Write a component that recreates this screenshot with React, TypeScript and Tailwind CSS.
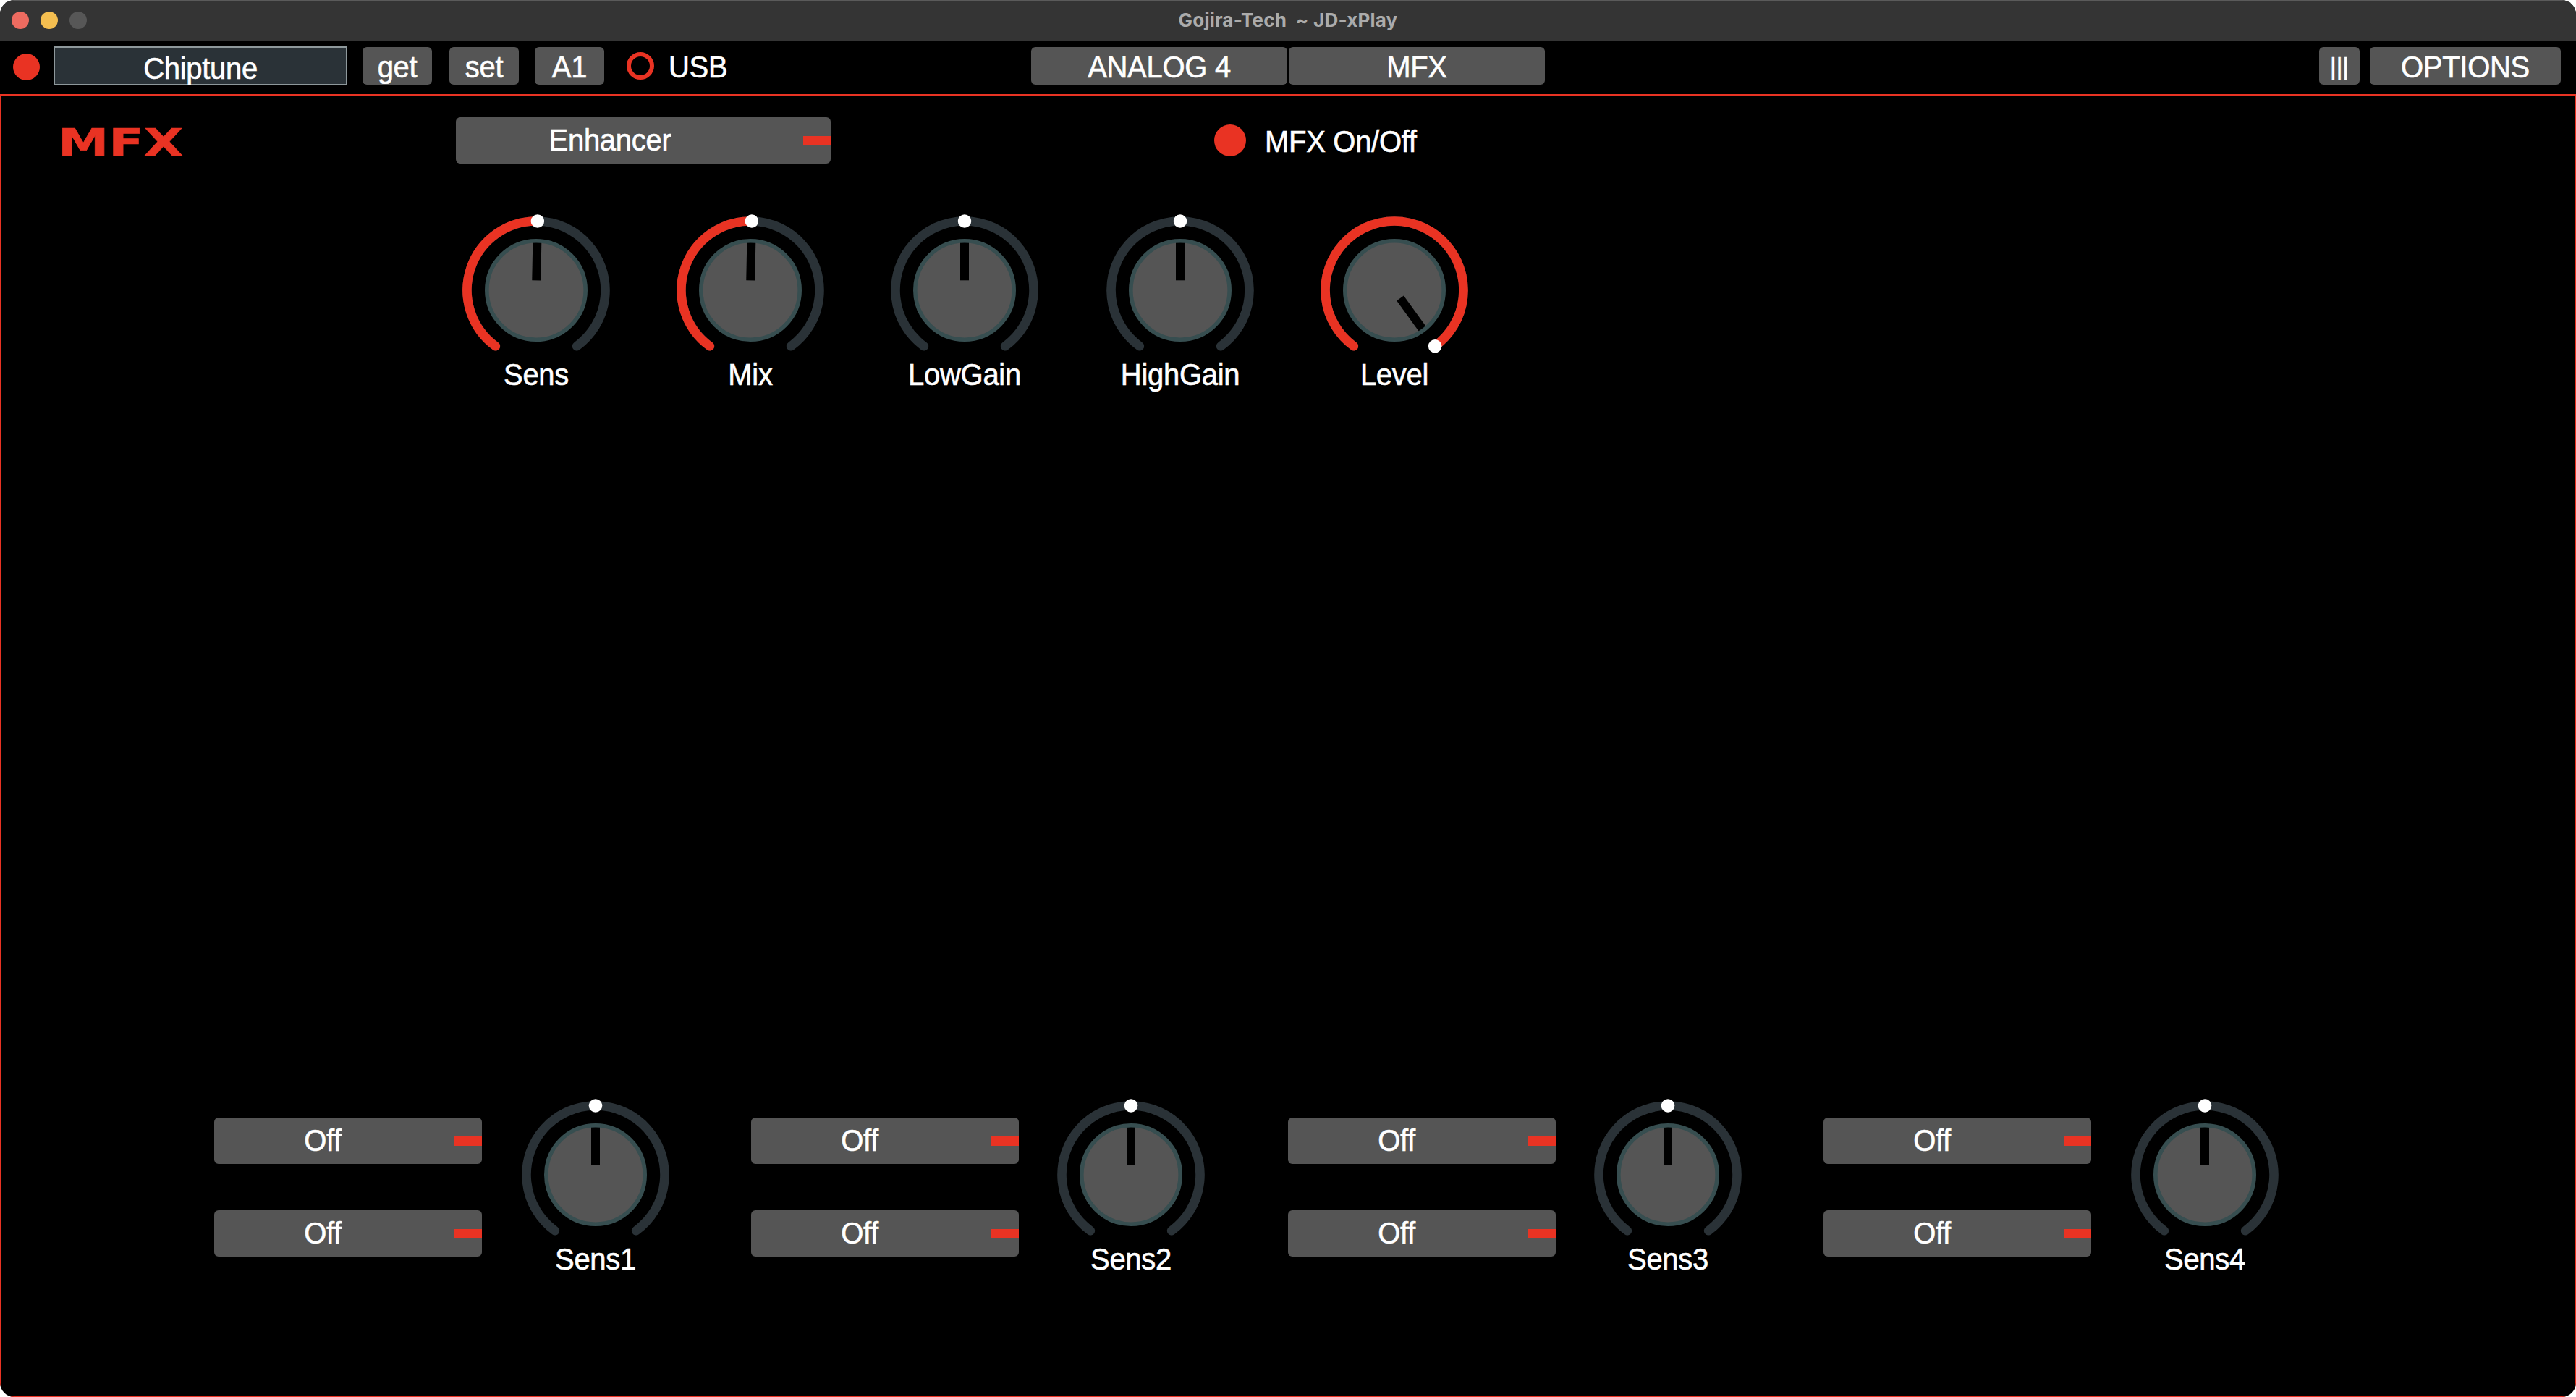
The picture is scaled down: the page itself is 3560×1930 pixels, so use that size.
import React from 'react';
import clsx from 'clsx';

interface KnobProps {
  label: string;
  angle?: number;
  filled?: boolean;
}

const RADIUS = 95.5;
const MAX_ANGLE = 144;

const pointAt = (angle: number) => {
  const rad = (angle * Math.PI) / 180;
  return { x: RADIUS * Math.sin(rad), y: -RADIUS * Math.cos(rad) };
};

const arcPath = (from: number, to: number) => {
  const a = pointAt(from);
  const b = pointAt(to);
  const large = to - from > 180 ? 1 : 0;
  return `M ${a.x} ${a.y} A ${RADIUS} ${RADIUS} 0 ${large} 1 ${b.x} ${b.y}`;
};

const Text: React.FC<{ children: React.ReactNode; className?: string }> = ({ children, className }) => (
  <span
    className={clsx(
      'block text-[40px] leading-none whitespace-pre tracking-[-0.3px] scale-y-[1.04] [-webkit-text-stroke:0.6px_white]',
      className
    )}
  >
    {children}
  </span>
);

const Knob: React.FC<KnobProps> = ({ label, angle = 0, filled = false }) => {
  const dot = pointAt(angle);
  return (
    <div className="w-[220px] flex flex-col items-center">
      <svg className="w-[220px] h-[206px] block" viewBox="-110 -110 220 206" fill="none">
        <path d={arcPath(-MAX_ANGLE, MAX_ANGLE)} stroke="#2a3237" strokeWidth="12.6" strokeLinecap="round" />
        {filled && (
          <path d={arcPath(-MAX_ANGLE, angle)} stroke="#e93323" strokeWidth="12.6" strokeLinecap="round" />
        )}
        <circle r="68" fill="#555555" />
        <rect x="-6" y="-67" width="12" height="53.3" fill="#000000" transform={`rotate(${angle})`} />
        <circle r="68.2" stroke="#374e50" strokeWidth="5.6" />
        <circle cx={dot.x} cy={dot.y} r="9.3" fill="#ffffff" />
      </svg>
      <Text>{label}</Text>
    </div>
  );
};

const Button: React.FC<{ children: React.ReactNode; className?: string }> = ({ children, className }) => (
  <button
    type="button"
    className={clsx('h-[52px] pt-[2px] rounded-[6px] bg-[#555555] flex items-center justify-center shrink-0', className)}
  >
    {children}
  </button>
);

const Dropdown: React.FC<{ value: string; className?: string }> = ({ value, className }) => (
  <button
    type="button"
    className={clsx('h-16 rounded-[6px] bg-[#555555] flex items-center shrink-0', className)}
  >
    <span className="flex-1 flex justify-center pb-[2px]">
      <Text>{value}</Text>
    </span>
    <span className="w-[38px] h-[13px] bg-[#e93323]" />
  </button>
);

const assignKnobs = [
  { name: 'Sens1', gap: 'ml-[47px]' },
  { name: 'Sens2', gap: 'ml-[45px]' },
  { name: 'Sens3', gap: 'ml-[45px]' },
  { name: 'Sens4', gap: 'ml-[47px]' },
];

const TitleBar = () => (
  <div className="h-14 shrink-0 bg-[#343434] border-t-2 border-[#5a5a5a] flex items-center">
    <div className="flex-1 flex gap-4 pl-4 pb-[2px]">
      <span className="w-6 h-6 rounded-full bg-[#ed6b60]" />
      <span className="w-6 h-6 rounded-full bg-[#f4be50]" />
      <span className="w-6 h-6 rounded-full bg-[#575757]" />
    </div>
    <span className="font-['Inter'] font-bold text-[26px] tracking-[0.2px] leading-none text-[#ababab] whitespace-pre pb-[3px]">
      {'Gojira-Tech  ~ JD-xPlay'}
    </span>
    <div className="flex-1 pr-4" />
  </div>
);

const Toolbar = () => (
  <div className="h-[74px] shrink-0 flex items-center pb-1">
    <div className="w-[1425px] flex items-center">
      <span className="w-[37px] h-[37px] ml-[18px] mt-[3px] rounded-full bg-[#e93323]" />
      <div className="w-[406px] h-[54px] ml-[19px] pt-[5px] border-2 border-[#8e989b] bg-[#2a3237] flex items-center justify-center">
        <Text>Chiptune</Text>
      </div>
      <Button className="w-24 ml-[21px]">
        <Text>get</Text>
      </Button>
      <Button className="w-24 ml-6">
        <Text>set</Text>
      </Button>
      <Button className="w-24 ml-[22px]">
        <Text>A1</Text>
      </Button>
      <span className="w-[38px] h-[38px] ml-[31px] rounded-full border-6 border-[#e93323]" />
      <div className="ml-5 pt-[2px]">
        <Text>USB</Text>
      </div>
    </div>
    <div className="flex gap-[2px]">
      <Button className="w-[354px]">
        <Text>ANALOG 4</Text>
      </Button>
      <Button className="w-[354px]">
        <Text>MFX</Text>
      </Button>
    </div>
    <div className="ml-auto mr-[21px] flex gap-[14px]">
      <Button className="w-14">
        <span className="block text-[33.5px] leading-none [-webkit-text-stroke:0.6px_white]">|||</span>
      </Button>
      <Button className="w-66">
        <Text>OPTIONS</Text>
      </Button>
    </div>
  </div>
);

const App: React.FC = () => {
  return (
    <div className="w-[3560px] h-[1930px] bg-white">
      <div className="w-full h-full rounded-[20px] overflow-hidden bg-black text-white flex flex-col font-['Liberation_Sans',Arial,sans-serif]">
        <TitleBar />
        <Toolbar />
        <main className="flex-1 border-2 border-[#e93323] flex flex-col">
          <div className="h-16 mt-[30px] flex items-center">
            <div className="w-[628px] pl-[78px] pt-[6px]">
              <h1 className="inline-block origin-left scale-x-[1.36] font-['DejaVu_Sans',sans-serif] font-bold text-[52px] leading-none text-[#e93323] [-webkit-text-stroke:0.6px_#e93323]">
                MFX
              </h1>
            </div>
            <Dropdown value="Enhancer" className="w-[518px] [&>span:first-child]:mr-[54px]" />
            <span className="w-11 h-11 ml-[530px] rounded-full bg-[#e93323]" />
            <div className="ml-[26px] pt-[2px]">
              <Text>MFX On/Off</Text>
            </div>
          </div>

          <div className="mt-[65px] pl-[629px] grid grid-cols-[296px_296px_298px_296px_296px]">
            <Knob label="Sens" angle={1.13} filled />
            <Knob label="Mix" angle={1.13} filled />
            <Knob label="LowGain" />
            <Knob label="HighGain" />
            <Knob label="Level" angle={144} filled />
          </div>

          <div className="mt-auto pb-[169px] pl-[294px] grid grid-cols-[742px_742px_740px_740px]">
            {assignKnobs.map(({ name, gap }) => (
              <div key={name} className="flex">
                <div className="pt-[31px] flex flex-col gap-16">
                  <Dropdown value="Off" className="w-[370px] [&>span:first-child]:mr-8" />
                  <Dropdown value="Off" className="w-[370px] [&>span:first-child]:mr-8" />
                </div>
                <div className={gap}>
                  <Knob label={name} />
                </div>
              </div>
            ))}
          </div>
        </main>
      </div>
    </div>
  );
};

export default App;
